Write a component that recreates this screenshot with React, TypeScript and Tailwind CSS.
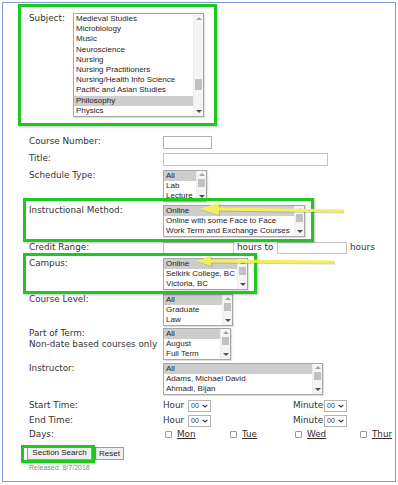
import type { ReactNode } from "react";

const LIST_FONT = "font-['Liberation_Sans',Arial,sans-serif]";

function ListBox({
  items,
  selected,
  width,
  rows = 3,
  rowH = "h-[10px] leading-[10px]",
  thumbTop = 0,
  thumbH = 8,
}: {
  items: string[];
  selected: number;
  width: string;
  rows?: number;
  rowH?: string;
  thumbTop?: number;
  thumbH?: number;
}) {
  return (
    <div className={`${width} flex border border-[#a6a6a6] bg-white shadow-[1px_1px_1px_rgba(0,0,0,0.12)]`}>
      <div className={`flex-1 min-w-0 overflow-hidden ${LIST_FONT} text-[8px] text-[#2a1c1c]`}>
        {items.slice(0, rows).map((it, i) => (
          <div key={it} className={`${rowH} pl-[2px] whitespace-nowrap ${i === selected ? "bg-[#cdcdcd]" : ""}`}>
            {it}
          </div>
        ))}
      </div>
      <div className="w-[10px] flex flex-col bg-[#f4f4f4] border-l border-[#ececec]">
        <div className="h-[8px] flex items-center justify-center">
          <div className="w-0 h-0 border-l-[3px] border-r-[3px] border-b-[3px] border-l-transparent border-r-transparent border-b-[#a3a3a3]" />
        </div>
        <div className="flex-1 relative">
          <div className="absolute left-[1px] right-[1px] bg-[#c1c1c1]" style={{ top: thumbTop, height: thumbH }} />
        </div>
        <div className="h-[8px] flex items-center justify-center">
          <div className="w-0 h-0 border-l-[3px] border-r-[3px] border-t-[3px] border-l-transparent border-r-transparent border-t-[#505050]" />
        </div>
      </div>
    </div>
  );
}

function Row({ label, children, className = "" }: { label: ReactNode; children: ReactNode; className?: string }) {
  return (
    <div className={`flex items-start ${className}`}>
      <div className="w-[134px] shrink-0 leading-[11px]">{label}</div>
      <div className="flex-1 min-w-0">{children}</div>
    </div>
  );
}

function TimeSelect() {
  return (
    <div className="w-[23px] h-[12px] border border-[#b5b5b5] bg-white flex items-center justify-between px-[2px] text-[7px] text-[#333]">
      <span className={LIST_FONT}>00</span>
      <svg width="6" height="4" viewBox="0 0 6 4">
        <path d="M0.7 0.8 L3 3 L5.3 0.8" fill="none" stroke="#333" strokeWidth="1.1" />
      </svg>
    </div>
  );
}

function TimeRow() {
  return (
    <div className="flex items-center h-[12px]">
      <div className="w-[130px] flex items-center">
        <span className="w-[25px]">Hour</span>
        <TimeSelect />
      </div>
      <span className="w-[31px]">Minute</span>
      <TimeSelect />
    </div>
  );
}

export default function App() {
  const subjects = [
    "Medieval Studies",
    "Microbiology",
    "Music",
    "Neuroscience",
    "Nursing",
    "Nursing Practitioners",
    "Nursing/Health Info Science",
    "Pacific and Asian Studies",
    "Philosophy",
    "Physics",
  ];

  return (
    <div className="w-[398px] h-[485px] bg-white relative overflow-hidden font-['DejaVu_Sans',Verdana,sans-serif] text-[8.8px] text-[#333]">
      <div className="ml-[2px] mt-[2px] w-[394px] h-[480px] border border-[#7c9ddf] overflow-hidden pl-[26px]">
        {/* subject */}
        <div className="flex items-start mt-[10px]">
          <div className="w-[44px] leading-[11px]">Subject:</div>
          <ListBox
            items={subjects}
            selected={8}
            width="w-[131px]"
            rows={10}
            rowH="h-[10.2px] leading-[10.2px]"
            thumbTop={57}
            thumbH={11}
          />
        </div>

        <Row label="Course Number:" className="mt-[19px]">
          <div className="w-[49px] h-[13px] border border-[#b0b0b0] bg-white" />
        </Row>
        <Row label="Title:" className="mt-[4px]">
          <div className="w-[165px] h-[13px] border border-[#c4c4c4] bg-white" />
        </Row>
        <Row label="Schedule Type:" className="mt-[4px]">
          <ListBox items={["All", "Lab", "Lecture"]} selected={0} width="w-[44px]" />
        </Row>
        <Row label="Instructional Method:" className="mt-[3px]">
          <ListBox
            items={["Online", "Online with some Face to Face", "Work Term and Exchange Courses"]}
            selected={0}
            width="w-[142px]"
          />
        </Row>
        <Row label="Credit Range:" className="mt-[5px]">
          <div className="flex items-center h-[12px]">
            <div className="w-[71px] h-[12px] border border-[#c4c4c4] bg-white" />
            <span className="ml-[3px] w-[40px]">hours to</span>
            <div className="w-[70px] h-[12px] border border-[#c4c4c4] bg-white" />
            <span className="ml-[3px]">hours</span>
          </div>
        </Row>
        <Row label="Campus:" className="mt-[4px]">
          <ListBox items={["Online", "Selkirk College, BC", "Victoria, BC"]} selected={0} width="w-[85px]" />
        </Row>
        <Row label="Course Level:" className="mt-[4px]">
          <ListBox items={["All", "Graduate", "Law"]} selected={0} width="w-[70px]" />
        </Row>
        <Row
          label={
            <>
              Part of Term:
              <br />
              Non-date based courses only
            </>
          }
          className="mt-[2px]"
        >
          <ListBox items={["All", "August", "Full Term"]} selected={0} width="w-[68px]" />
        </Row>
        <Row label="Instructor:" className="mt-[3px]">
          <ListBox items={["All", "Adams, Michael David", "Ahmadi, Bijan"]} selected={0} width="w-[160px]" />
        </Row>
        <Row label="Start Time:" className="mt-[5px]">
          <TimeRow />
        </Row>
        <Row label="End Time:" className="mt-[3px]">
          <TimeRow />
        </Row>
        <Row label="Days:" className="mt-[2px]">
          <div className="flex items-center h-[12px] pl-[2px] whitespace-nowrap">
            {["Mon", "Tue", "Wed", "Thur"].map((d) => (
              <div key={d} className="w-[65px] shrink-0 flex items-center">
                <div className="w-[7px] h-[7px] border border-[#9a9a9a] bg-white rounded-[1px]" />
                <span className="ml-[5px] underline text-[#3a2a2a]">{d}</span>
              </div>
            ))}
          </div>
        </Row>

        <div className={`flex items-end gap-[3px] -ml-[2px] mt-[5px] ${LIST_FONT} text-[8px] text-[#222]`}>
          <button className="w-[65px] h-[14px] border border-[#9c9c9c] bg-[#efefef] leading-[12px]">Section Search</button>
          <button className="w-[29px] h-[13px] border border-[#9c9c9c] bg-[#efefef] leading-[11px]">Reset</button>
        </div>
        <div className={`mt-[3px] ${LIST_FONT} text-[7px] text-[#8a8a8a] leading-[9px]`}>Released: 8/7/2018</div>
      </div>

      {/* annotation overlays */}
      <div className="absolute left-[18px] top-[4px] w-[199px] h-[122px] border-[3px] border-[#1ec81e] shadow-[1px_1px_2px_rgba(0,0,0,0.25)] pointer-events-none" />
      <div className="absolute left-[23px] top-[198px] w-[291px] h-[44px] border-[3px] border-[#1ec81e] shadow-[1px_1px_2px_rgba(0,0,0,0.25)] pointer-events-none" />
      <div className="absolute left-[23px] top-[253px] w-[234px] h-[41px] border-[3px] border-[#1ec81e] shadow-[1px_1px_2px_rgba(0,0,0,0.25)] pointer-events-none" />
      <div className="absolute left-[21px] top-[445px] w-[74px] h-[18px] border-[3px] border-[#1ec81e] shadow-[1px_1px_2px_rgba(0,0,0,0.25)] pointer-events-none" />

      <svg className="absolute inset-0 pointer-events-none" width="398" height="485" viewBox="0 0 398 485">
        <g opacity="0.35" transform="translate(1,1)">
          <line x1="216" y1="209" x2="343" y2="211" stroke="#777" strokeWidth="3" />
          <polygon points="199,209 219,203 219,215" fill="#777" />
          <line x1="208" y1="261" x2="334" y2="262" stroke="#777" strokeWidth="3" />
          <polygon points="196,261 211,256 211,266" fill="#777" />
        </g>
        <line x1="216" y1="209" x2="343" y2="211" stroke="#f3ef5c" strokeWidth="3" />
        <polygon points="199,209 219,203 219,215" fill="#f3ef5c" />
        <line x1="208" y1="261" x2="334" y2="262" stroke="#f3ef5c" strokeWidth="3" />
        <polygon points="196,261 211,256 211,266" fill="#f3ef5c" />
      </svg>
    </div>
  );
}
